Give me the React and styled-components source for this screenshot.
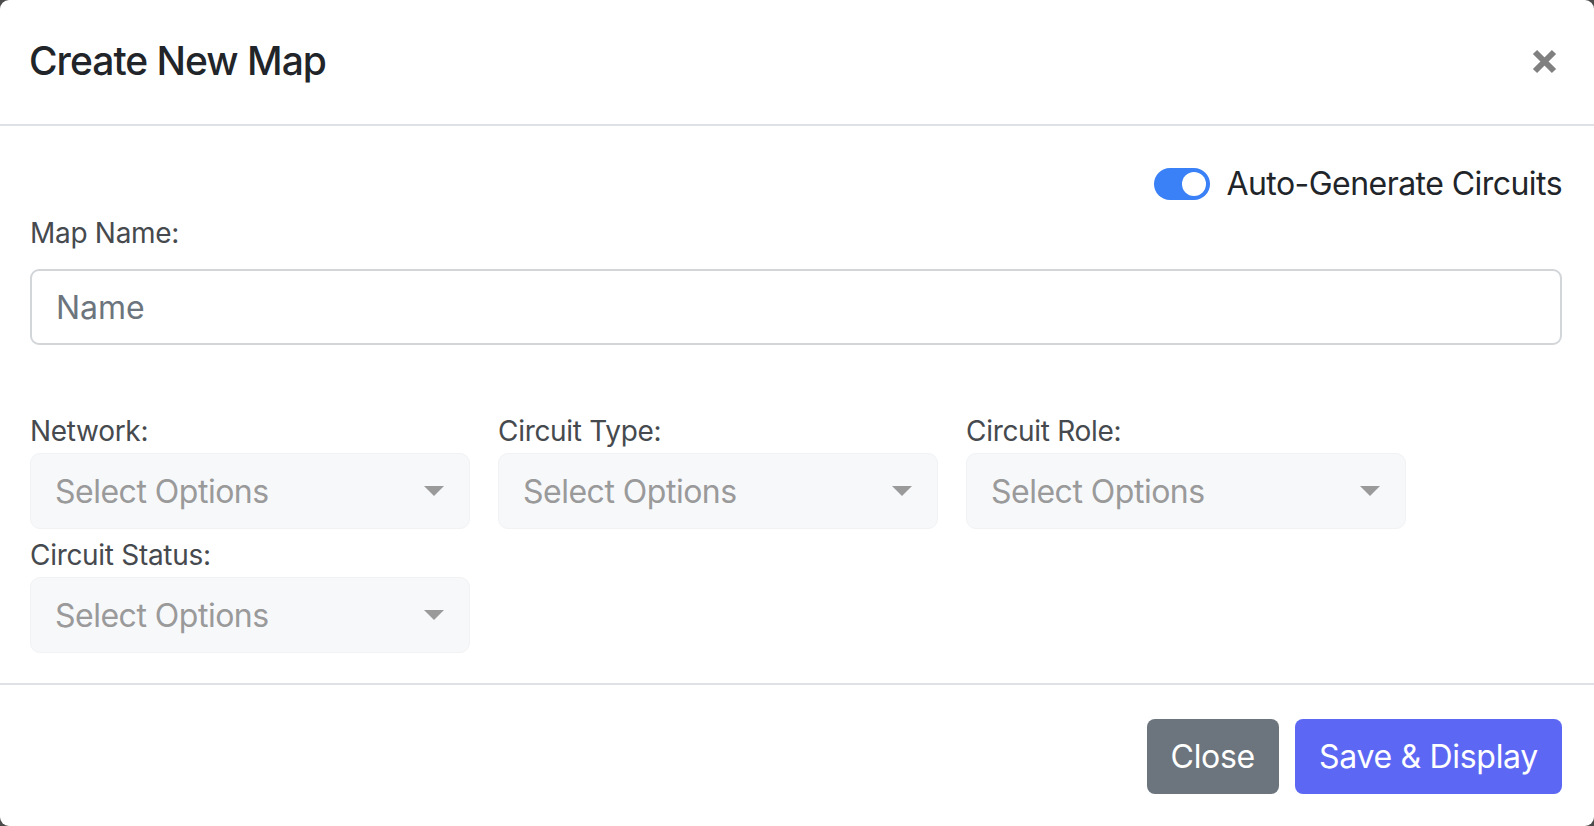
import React from "react";
import styled, { createGlobalStyle } from "styled-components";

const Global = createGlobalStyle`
  html, body { margin: 0; padding: 0; background: #4b4b4b; }
  body { font-family: Inter, "Noto Sans", "Liberation Sans", sans-serif; color: #212529; }
  * { box-sizing: border-box; }
`;

const Modal = styled.div`
  width: 1594px;
  height: 826px;
  background: #fff;
  border-radius: 9px;
  display: flex;
  flex-direction: column;
  overflow: hidden;
`;

const Header = styled.div`
  display: flex;
  align-items: center;
  justify-content: space-between;
  height: 126px;
  padding: 0 37px 2px 29px;
  border-bottom: 2px solid #dee2e6;
`;

const Title = styled.h5`
  margin: 0;
  font-size: 39px;
  font-weight: 500;
  line-height: 60px;
  letter-spacing: -1px;
  color: #212529;
`;

const CloseX = styled.button`
  border: 0;
  background: none;
  padding: 0;
  width: 25px;
  height: 25px;
  display: flex;
  cursor: pointer;
`;

const Body = styled.div`
  padding: 34px 32px 30px 30px;
  display: flex;
  flex-direction: column;
  border-bottom: 2px solid #dee2e6;
`;

const SwitchRow = styled.label`
  display: flex;
  align-items: center;
  justify-content: flex-end;
  gap: 16px;
  height: 48px;
  font-size: 32px;
  line-height: 48px;
  letter-spacing: -0.55px;
  color: #212529;
`;

const Track = styled.span`
  position: relative;
  width: 56px;
  height: 32px;
  border-radius: 16px;
  background: ${(p) => (p.$on ? "#3a80f6" : "#ced4da")};
  flex: none;
`;

const Knob = styled.span`
  position: absolute;
  top: 4px;
  left: ${(p) => (p.$on ? "28px" : "4px")};
  width: 24px;
  height: 24px;
  border-radius: 50%;
  background: #fff;
`;

const Label = styled.div`
  font-size: 28px;
  line-height: 42px;
  height: ${(p) => p.$h || 42}px;
  color: #464a4e;
  letter-spacing: -0.3px;
`;

const NameLabel = styled(Label)`
  margin-top: 4px;
  margin-bottom: 15px;
`;

const TextInput = styled.input`
  width: 100%;
  height: 76px;
  border: 2px solid #d3d6d9;
  border-radius: 9px;
  padding: 0 24px;
  font-family: inherit;
  font-size: 32px;
  color: #212529;
  outline: none;
  &::placeholder { color: #6c757d; }
`;

const Fields = styled.div`
  margin-top: 65px;
  display: flex;
  flex-wrap: wrap;
  column-gap: 28px;
  row-gap: 5px;
`;

const Field = styled.div`
  width: 440px;
  display: flex;
  flex-direction: column;
`;

const SelectBox = styled.div`
  height: 76px;
  border-radius: 10px;
  background: #f7f8fa;
  border: 1px solid #f1f2f4;
  display: flex;
  align-items: center;
  justify-content: space-between;
  padding: 0 25px 0 24px;
  font-size: 32px;
  letter-spacing: -0.5px;
  color: #9a9a9a;
  cursor: pointer;
`;

const Footer = styled.div`
  flex: 1;
  display: flex;
  justify-content: flex-end;
  align-items: flex-start;
  gap: 16px;
  padding: 34px 32px 0 0;
`;

const Button = styled.button`
  height: 75px;
  border: 0;
  border-radius: 8px;
  padding: 0 24px;
  font-family: inherit;
  font-size: 32px;
  letter-spacing: -0.3px;
  color: #fff;
  background: ${(p) => (p.$variant === "primary" ? "#5c68f4" : "#6c757d")};
  cursor: pointer;
`;

const Caret = () => (
  <svg width="20" height="10" viewBox="0 0 20 10">
    <path d="M0 0 H20 L10 10 Z" fill="#9a9a9a" />
  </svg>
);

const XIcon = () => (
  <svg width="25" height="25" viewBox="0 0 25 25">
    <path d="M3 3 L22 22 M22 3 L3 22" stroke="#808080" strokeWidth="6" strokeLinecap="butt" />
  </svg>
);

const fields = [
  { label: "Network:", h: 43 },
  { label: "Circuit Type:", h: 43 },
  { label: "Circuit Role:", h: 43 },
  { label: "Circuit Status:", h: 43 },
];

export default function App() {
  return (
    <>
      <Global />
      <Modal>
        <Header>
          <Title>Create New Map</Title>
          <CloseX aria-label="Close">
            <XIcon />
          </CloseX>
        </Header>
        <Body>
          <SwitchRow>
            <Track $on>
              <Knob $on />
            </Track>
            Auto-Generate Circuits
          </SwitchRow>
          <NameLabel>Map Name:</NameLabel>
          <TextInput placeholder="Name" />
          <Fields>
            {fields.map((f) => (
              <Field key={f.label}>
                <Label $h={f.h}>{f.label}</Label>
                <SelectBox>
                  Select Options
                  <Caret />
                </SelectBox>
              </Field>
            ))}
          </Fields>
        </Body>
        <Footer>
          <Button>Close</Button>
          <Button $variant="primary">Save &amp; Display</Button>
        </Footer>
      </Modal>
    </>
  );
}
